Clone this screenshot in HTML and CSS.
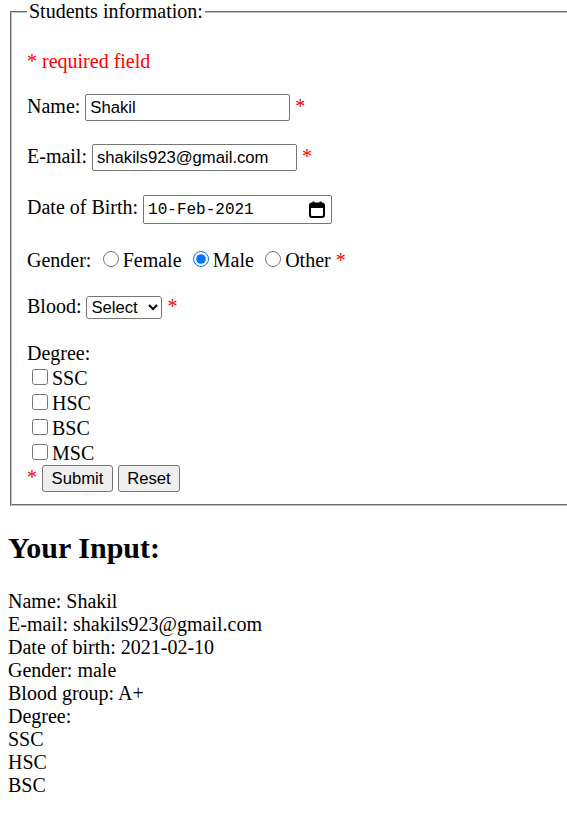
FILE: index.html
```html
<!DOCTYPE html>
<html lang="en">
<head>
<meta charset="utf-8">
<title>Students information</title>
<link rel="stylesheet" href="styles.css">
</head>
<body>
<form class="student-form">
  <fieldset class="student-fieldset">
    <legend class="student-legend">Students information:</legend>
    <div class="row required-note">* required field</div>

    <div class="row row-name">
      <label>Name: <input class="text-input" type="text" value="Shakil"></label> <span class="req">*</span>
    </div>

    <div class="row row-gap">
      <label>E-mail: <input class="text-input" type="text" value="shakils923@gmail.com"></label> <span class="req">*</span>
    </div>

    <div class="row row-gap row-dob">
      <label>Date of Birth: <span class="date-input"><span class="date-text">10-Feb-2021</span><svg class="cal-icon" width="16" height="17" viewBox="0 0 16 17"><rect x="3.5" y="0.5" width="2" height="3" fill="#000"/><rect x="10.5" y="0.5" width="2" height="3" fill="#000"/><rect x="1" y="2.5" width="14" height="13.5" rx="2" fill="none" stroke="#000" stroke-width="2"/><rect x="1" y="2.5" width="14" height="4.5" fill="#000"/></svg></span></label>
    </div>

    <div class="row row-gap row-gender">
      Gender: <input class="radio" type="radio" name="g">Female <input class="radio" type="radio" name="g" checked>Male <input class="radio" type="radio" name="g">Other <span class="req">*</span>
    </div>

    <div class="row row-gap">
      <label>Blood: <select class="blood-select"><option>Select</option><option>A+</option></select></label> <span class="req">*</span>
    </div>

    <div class="row row-gap">Degree:</div>
    <div class="row"><input class="check" type="checkbox">SSC</div>
    <div class="row"><input class="check" type="checkbox">HSC</div>
    <div class="row"><input class="check" type="checkbox">BSC</div>
    <div class="row"><input class="check" type="checkbox">MSC</div>
    <div class="row"><span class="req">*</span> <input class="btn btn-submit" type="submit" value="Submit"> <input class="btn btn-reset" type="reset" value="Reset"></div>
  </fieldset>
</form>

<h2 class="result-title">Your Input:</h2>
<div class="result">
  Name: Shakil<br>
  E-mail: shakils923@gmail.com<br>
  Date of birth: 2021-02-10<br>
  Gender: male<br>
  Blood group: A+<br>
  Degree:<br>
  SSC<br>
  HSC<br>
  BSC
</div>
</body>
</html>
```

FILE: styles.css
```css
html, body {
  background: #fff;
}

body {
  margin: 0 0 0 8px;
  font-family: "Liberation Serif", "Times New Roman", serif;
  font-size: 20px;
  line-height: 23px;
  color: #000;
}

.student-form {
  margin: 0;
}

.student-fieldset {
  margin: 0 0 0 2px;
  border: 2px groove #c0c0c0;
  border-right: 0;
  padding: 26.5px 0 11.5px 15px;
  min-width: 0;
}

.student-legend {
  padding: 0 2px;
  font-size: 20px;
  line-height: 23px;
}

.row {
  margin: 0;
}

.required-note {
  color: #ff0000;
}

.row-name {
  margin-top: 21.5px;
}

.row-gap {
  margin-top: 23px;
}

.row-dob {
  margin-top: 24px;
}

.req {
  color: #ff0000;
}

.text-input {
  box-sizing: border-box;
  width: 205px;
  height: 27px;
  margin: 0;
  padding: 0 4px;
  border: 1px solid #767676;
  border-radius: 2px;
  font-family: "Liberation Sans", Arial, sans-serif;
  font-size: 16.67px;
  color: #000;
  background: #fff;
  vertical-align: baseline;
}

.date-input {
  box-sizing: border-box;
  display: inline-flex;
  align-items: center;
  justify-content: space-between;
  width: 189px;
  height: 29px;
  padding: 0 6px 0 4px;
  border: 1px solid #767676;
  border-radius: 2px;
  font-family: "Liberation Mono", "DejaVu Sans Mono", monospace;
  font-size: 16px;
  line-height: 20px;
  vertical-align: baseline;
}

.cal-icon {
  display: block;
}

.radio {
  width: 16.25px;
  height: 16.25px;
  margin: 3.75px 3.75px 0 6.25px;
  vertical-align: baseline;
}

.check {
  width: 16.25px;
  height: 16.25px;
  margin: 3.75px 3.75px 3.75px 5px;
  vertical-align: baseline;
}

.blood-select {
  box-sizing: border-box;
  width: 76px;
  height: 23px;
  margin: 0;
  border: 1px solid #767676;
  border-radius: 3px;
  font-family: "Liberation Sans", Arial, sans-serif;
  font-size: 16.67px;
  color: #000;
  background: #fff;
}

.btn {
  box-sizing: border-box;
  height: 27px;
  margin: 0;
  padding: 0;
  border: 1px solid #767676;
  border-radius: 3px;
  background: #efefef;
  font-family: "Liberation Sans", Arial, sans-serif;
  font-size: 16.67px;
  color: #000;
}

.btn-submit {
  width: 71px;
}

.btn-reset {
  width: 62px;
}

.result-title {
  margin: 25px 0;
  font-size: 30px;
  line-height: 34.5px;
  font-weight: bold;
}

.result {
  font-size: 20px;
  line-height: 23px;
}
```
